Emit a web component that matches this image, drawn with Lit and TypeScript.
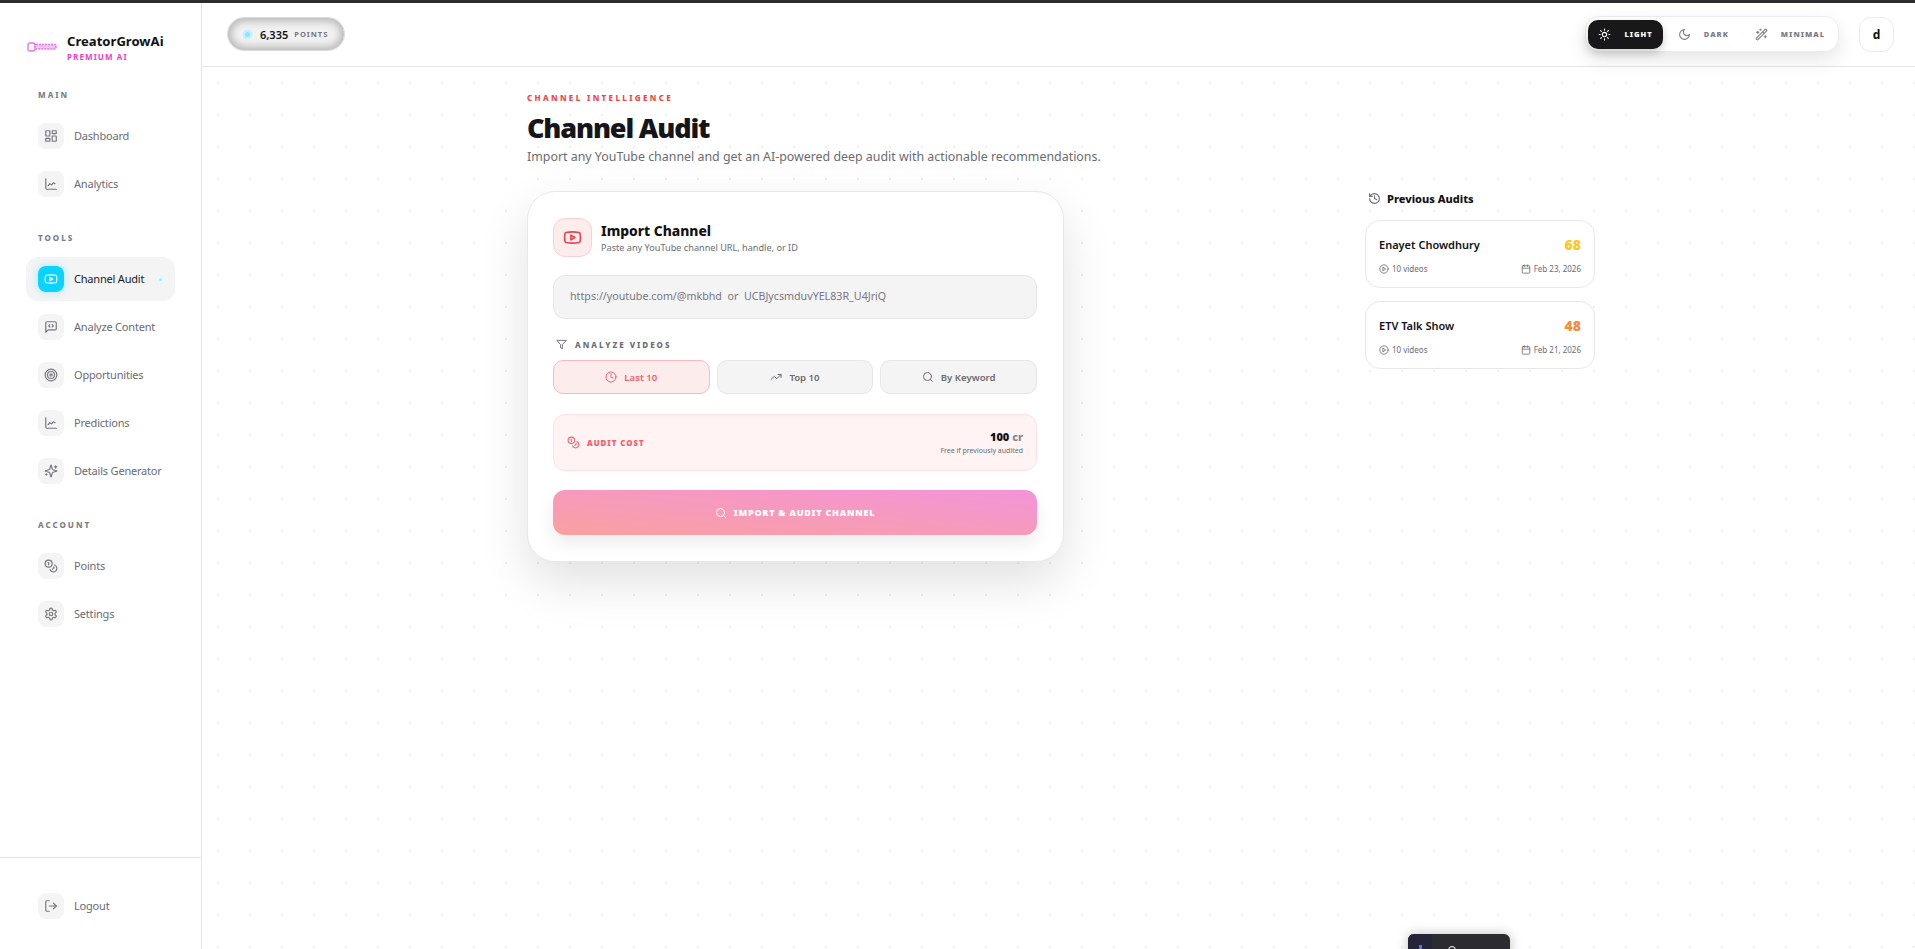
import { LitElement, html, svg, css } from 'lit';
import { customElement } from 'lit/decorators.js';

const icons: Record<string, unknown> = {
  dashboard: svg`<rect x="3" y="3" width="7" height="9" rx="1"/><rect x="14" y="3" width="7" height="5" rx="1"/><rect x="14" y="12" width="7" height="9" rx="1"/><rect x="3" y="16" width="7" height="5" rx="1"/>`,
  chart: svg`<path d="M3 3v16a2 2 0 0 0 2 2h16"/><path d="m7 15 3-3.5 3 2 3-3.5 3 1.5"/>`,
  youtube: svg`<path d="M2.5 17a24.12 24.12 0 0 1 0-10 2 2 0 0 1 1.4-1.4 49.56 49.56 0 0 1 16.2 0A2 2 0 0 1 21.5 7a24.12 24.12 0 0 1 0 10 2 2 0 0 1-1.4 1.4 49.55 49.55 0 0 1-16.2 0A2 2 0 0 1 2.5 17"/><path d="m10 15 5-3-5-3z"/>`,
  message: svg`<path d="M21 15a2 2 0 0 1-2 2H7l-4 4V5a2 2 0 0 1 2-2h14a2 2 0 0 1 2 2z"/><path d="m10 8-2 2 2 2"/><path d="m14 8 2 2-2 2"/>`,
  target: svg`<circle cx="12" cy="12" r="10"/><circle cx="12" cy="12" r="6"/><circle cx="12" cy="12" r="2"/>`,
  sparkles: svg`<path d="M9.937 15.5A2 2 0 0 0 8.5 14.063l-6.135-1.582a.5.5 0 0 1 0-.962L8.5 9.936A2 2 0 0 0 9.937 8.5l1.582-6.135a.5.5 0 0 1 .963 0L14.063 8.5A2 2 0 0 0 15.5 9.937l6.135 1.581a.5.5 0 0 1 0 .964L15.5 14.063a2 2 0 0 0-1.437 1.437l-1.582 6.135a.5.5 0 0 1-.963 0z"/><path d="M20 3v4"/><path d="M22 5h-4"/><path d="M4 17v2"/><path d="M5 18H3"/>`,
  coins: svg`<circle cx="8" cy="8" r="6"/><path d="M18.09 10.37A6 6 0 1 1 10.34 18"/><path d="M7 6h1v4"/><path d="m16.71 13.88.7.71-2.82 2.82"/>`,
  settings: svg`<path d="M12.22 2h-.44a2 2 0 0 0-2 2v.18a2 2 0 0 1-1 1.73l-.43.25a2 2 0 0 1-2 0l-.15-.08a2 2 0 0 0-2.73.73l-.22.38a2 2 0 0 0 .73 2.73l.15.1a2 2 0 0 1 1 1.72v.51a2 2 0 0 1-1 1.74l-.15.09a2 2 0 0 0-.73 2.73l.22.38a2 2 0 0 0 2.73.73l.15-.08a2 2 0 0 1 2 0l.43.25a2 2 0 0 1 1 1.73V20a2 2 0 0 0 2 2h.44a2 2 0 0 0 2-2v-.18a2 2 0 0 1 1-1.73l.43-.25a2 2 0 0 1 2 0l.15.08a2 2 0 0 0 2.73-.73l.22-.39a2 2 0 0 0-.73-2.73l-.15-.08a2 2 0 0 1-1-1.74v-.5a2 2 0 0 1 1-1.74l.15-.09a2 2 0 0 0 .73-2.73l-.22-.38a2 2 0 0 0-2.73-.73l-.15.08a2 2 0 0 1-2 0l-.43-.25a2 2 0 0 1-1-1.73V4a2 2 0 0 0-2-2z"/><circle cx="12" cy="12" r="3"/>`,
  logout: svg`<path d="m16 17 5-5-5-5"/><path d="M21 12H9"/><path d="M9 21H5a2 2 0 0 1-2-2V5a2 2 0 0 1 2-2h4"/>`,
  history: svg`<path d="M3 12a9 9 0 1 0 9-9 9.75 9.75 0 0 0-6.74 2.74L3 8"/><path d="M3 3v5h5"/><path d="M12 7v5l4 2"/>`,
  clock: svg`<circle cx="12" cy="12" r="10"/><path d="M12 6v6l4 2"/>`,
  trending: svg`<path d="M22 7 13.5 15.5l-5-5L2 17"/><path d="M16 7h6v6"/>`,
  search: svg`<circle cx="11" cy="11" r="8"/><path d="m21 21-4.3-4.3"/>`,
  filter: svg`<path d="M22 3H2l8 9.46V19l4 2v-8.54z"/>`,
  calendar: svg`<path d="M8 2v4"/><path d="M16 2v4"/><rect x="3" y="4" width="18" height="18" rx="2"/><path d="M3 10h18"/>`,
  play: svg`<circle cx="12" cy="12" r="10"/><path d="m10 8 6 4-6 4z"/>`,
  sun: svg`<circle cx="12" cy="12" r="4"/><path d="M12 2v2"/><path d="M12 20v2"/><path d="m4.93 4.93 1.41 1.41"/><path d="m17.66 17.66 1.41 1.41"/><path d="M2 12h2"/><path d="M20 12h2"/><path d="m6.34 17.66-1.41 1.41"/><path d="m19.07 4.93-1.41 1.41"/>`,
  moon: svg`<path d="M12 3a6 6 0 0 0 9 9 9 9 0 1 1-9-9Z"/>`,
  wand: svg`<path d="m21.64 3.64-1.28-1.28a1.21 1.21 0 0 0-1.72 0L2.36 18.64a1.21 1.21 0 0 0 0 1.72l1.28 1.28a1.2 1.2 0 0 0 1.72 0L21.64 5.36a1.2 1.2 0 0 0 0-1.72"/><path d="m14 7 3 3"/><path d="M5 6v4"/><path d="M19 14v4"/><path d="M10 2v2"/><path d="M7 8H3"/><path d="M21 16h-4"/><path d="M11 3H9"/>`,
};

const icon = (name: string, size = 16) => html`<svg class="ic" width=${size} height=${size} viewBox="0 0 24 24" fill="none" stroke="currentColor" stroke-width="2" stroke-linecap="round" stroke-linejoin="round">${icons[name]}</svg>`;

const groups = [
  { label: 'MAIN', items: [['dashboard', 'Dashboard'], ['chart', 'Analytics']] },
  { label: 'TOOLS', items: [['youtube', 'Channel Audit'], ['message', 'Analyze Content'], ['target', 'Opportunities'], ['chart', 'Predictions'], ['sparkles', 'Details Generator']] },
  { label: 'ACCOUNT', items: [['coins', 'Points'], ['settings', 'Settings']] },
];

const audits = [
  { name: 'Enayet Chowdhury', score: 68, color: '#fcc81e', date: 'Feb 23, 2026' },
  { name: 'ETV Talk Show', score: 48, color: '#ee8f45', date: 'Feb 21, 2026' },
];

@customElement('app-root')
export class AppRoot extends LitElement {
  static styles = css`
    :host {
      display: block;
      height: 100vh;
      overflow: hidden;
      position: relative;
      background: #fff;
      color: #111114;
      font-family: 'Noto Sans', 'Open Sans', sans-serif;
    }
    .ic { display: block; flex: none; }
    .topline { height: 3px; background: #2b2b30; }
    .shell { display: flex; height: calc(100vh - 3px); }

    .sidebar {
      width: 202px;
      flex: none;
      box-sizing: border-box;
      border-right: 1px solid #e6e6e6;
      display: flex;
      flex-direction: column;
    }
    .brand {
      display: flex;
      align-items: center;
      gap: 10px;
      padding: 28px 0 25px 27px;
    }
    .brand-name { font-size: 13.1px; font-weight: 700; line-height: 20px; }
    .brand-sub { font-size: 8px; font-weight: 700; line-height: 12px; letter-spacing: 1.1px; color: #f23dc0; }
    nav { flex: 1; padding: 0 26px; }
    .group { margin-bottom: 25px; }
    .group-label {
      font-size: 8px;
      font-weight: 800;
      line-height: 14px;
      letter-spacing: 2px;
      color: #7d7d85;
      margin: 0 0 12px 12px;
    }
    .item {
      display: flex;
      align-items: center;
      gap: 10px;
      height: 44px;
      margin-bottom: 4px;
      padding: 0 12px;
      width: 149px;
      box-sizing: border-box;
      border-radius: 12px;
      font-size: 11px;
      letter-spacing: -.2px;
      color: #6b6b73;
      white-space: nowrap;
    }
    .item:last-child { margin-bottom: 0; }
    .item-label { margin-bottom: 2px; }
    .tile {
      width: 26px;
      height: 26px;
      flex: none;
      border-radius: 8px;
      background: #f4f4f5;
      display: flex;
      align-items: center;
      justify-content: center;
      color: #75757c;
    }
    .item.active { background: #f4f4f5; color: #1a1a1f; }
    .item.active .tile { background: #0bd3ff; color: #fff; box-shadow: 0 0 8px rgba(11, 211, 255, .35); }
    .pip {
      width: 3px;
      height: 3px;
      border-radius: 50%;
      background: #a5ebff;
      box-shadow: 0 0 0 3px #e6f9ff;
      margin-left: auto;
      margin-right: 1px;
    }
    .foot { border-top: 1px solid #e6e6e6; padding: 26px 26px 21px; }

    .main { flex: 1; min-width: 0; display: flex; flex-direction: column; }
    .topbar {
      height: 64px;
      flex: none;
      box-sizing: border-box;
      border-bottom: 1px solid #e6e6e6;
      display: flex;
      align-items: center;
      padding: 0 21px 1px 25px;
    }
    .points {
      display: flex;
      align-items: center;
      gap: 6px;
      width: 118px;
      height: 34px;
      box-sizing: border-box;
      padding-left: 15px;
      border-radius: 17px;
      border: 1px solid #dcdcdc;
      background: #f2f2f2;
      box-shadow: inset 0 0 9px 3px #b4b4b4;
    }
    .points-dot {
      width: 5px;
      height: 5px;
      margin: 0 4px 0 2px;
      border-radius: 50%;
      background: #8fe4ff;
      box-shadow: 0 0 0 2.5px #c4f1ff;
    }
    .points b { font-size: 11px; font-weight: 600; }
    .points span { font-size: 7.5px; font-weight: 700; letter-spacing: 1px; color: #77777f; }
    .modes {
      margin-left: auto;
      display: flex;
      align-items: center;
      height: 36px;
      box-sizing: border-box;
      padding-left: 2px;
      border: 1px solid #ececec;
      border-radius: 14px;
      background: #fff;
      box-shadow: 0 8px 20px rgba(0, 0, 0, .1);
    }
    .mode {
      display: flex;
      align-items: center;
      gap: 13px;
      height: 29px;
      padding: 0 13px;
      border-radius: 10px;
      font-size: 7.5px;
      font-weight: 900;
      letter-spacing: 1px;
      color: #7d7d85;
    }
    .mode.on {
      padding: 0 10px;
      margin-right: 2px;
      background: #18181b;
      color: #fff;
      box-shadow: 0 4px 10px rgba(0, 0, 0, .2);
    }
    .avatar {
      margin-left: 20px;
      width: 35px;
      height: 35px;
      box-sizing: border-box;
      border: 1px solid #ececec;
      border-radius: 12px;
      display: flex;
      align-items: center;
      justify-content: center;
      font-size: 12px;
      font-weight: 700;
    }

    .content {
      flex: 1;
      padding: 25px 0 0 325px;
      background-image: radial-gradient(circle, #f0f0f0 1px, transparent 1.2px);
      background-size: 32px 32px;
    }
    .eyebrow { font-size: 8px; font-weight: 800; line-height: 12px; letter-spacing: 2.35px; color: #f04444; }
    h1 { margin: 6px 0 0; font-size: 27px; font-weight: 900; line-height: 36px; letter-spacing: -1.15px; color: #15151a; }
    .lede { margin: 1px 0 0; font-size: 12.4px; line-height: 20px; color: #6b6b73; }
    .columns { display: flex; justify-content: space-between; width: 1068px; margin-top: 24px; align-items: flex-start; }

    .card {
      width: 537px;
      box-sizing: border-box;
      padding: 26px 26px 26px 25px;
      background: #fff;
      border: 1px solid #e8e8e8;
      border-radius: 28px;
      box-shadow: 0 20px 50px rgba(0, 0, 0, .12);
    }
    .card-head { display: flex; align-items: center; gap: 9px; }
    .card-tile {
      width: 39px;
      height: 39px;
      box-sizing: border-box;
      border: 1px solid #fbd0d0;
      border-radius: 12px;
      background: #fdecec;
      color: #ee3f4a;
      display: flex;
      align-items: center;
      justify-content: center;
    }
    .card-title { font-size: 13.8px; font-weight: 800; line-height: 20px; }
    .card-sub { font-size: 9.15px; line-height: 14px; color: #6b6b73; }
    input {
      display: block;
      width: 100%;
      height: 44px;
      box-sizing: border-box;
      margin-top: 18px;
      padding: 0 16px 2px;
      border: 1px solid #e6e6e6;
      border-radius: 12px;
      background: #f4f4f5;
      font: 10.7px 'Noto Sans', sans-serif;
      outline: none;
    }
    input::placeholder { color: #77777f; opacity: 1; }
    .filter-label {
      display: flex;
      align-items: center;
      gap: 8px;
      margin: 18px 0 9px 3px;
      height: 14px;
      font-size: 8px;
      font-weight: 800;
      letter-spacing: 2px;
      color: #6b6b73;
    }
    .tabs { display: grid; grid-template-columns: repeat(3, 1fr); gap: 7px; }
    .tab {
      display: flex;
      align-items: center;
      justify-content: center;
      gap: 7px;
      height: 34px;
      box-sizing: border-box;
      border: 1px solid #e6e6e6;
      border-radius: 10px;
      background: #f4f4f5;
      font-size: 9.6px;
      font-weight: 600;
      color: #6b6b73;
    }
    .tab.on { background: #fdecec; border-color: #fbb9bd; color: #f2606c; }
    .cost {
      display: flex;
      align-items: center;
      justify-content: space-between;
      height: 57px;
      box-sizing: border-box;
      margin-top: 20px;
      padding: 0 13px;
      border: 1px solid #fde0e0;
      border-radius: 12px;
      background: #fff4f3;
    }
    .cost-label {
      display: flex;
      align-items: center;
      gap: 7px;
      font-size: 7.8px;
      font-weight: 900;
      letter-spacing: 1px;
      color: #f2606c;
    }
    .cost-right { text-align: right; }
    .cost-num { font-size: 11px; font-weight: 900; line-height: 16px; }
    .cost-num span { color: #85858c; font-weight: 800; }
    .cost-note { font-size: 7px; line-height: 11px; color: #6b6b73; }
    .submit {
      display: flex;
      align-items: center;
      justify-content: center;
      gap: 7px;
      height: 45px;
      margin-top: 19px;
      border-radius: 12px;
      background: linear-gradient(to top right, #f9a0a0, #f394d9);
      box-shadow: 0 8px 18px rgba(0, 0, 0, .08);
      color: #fff;
      font-size: 9px;
      font-weight: 900;
      letter-spacing: .75px;
    }

    .side { width: 230px; }
    .side-head {
      display: flex;
      align-items: center;
      gap: 6px;
      height: 16px;
      margin: -1px 0 14px 3px;
      font-size: 11px;
      font-weight: 800;
      color: #111114;
    }
    .side-head .ic { color: #6b6b73; }
    .audit {
      height: 68px;
      box-sizing: border-box;
      margin-bottom: 13px;
      padding: 10px 13px 0;
      background: #fff;
      border: 1px solid #e8e8e8;
      border-radius: 15px;
    }
    .audit-top { display: flex; align-items: center; justify-content: space-between; height: 26px; }
    .audit-name { font-size: 11px; font-weight: 600; }
    .audit-score { font-size: 14px; font-weight: 900; }
    .audit-meta {
      display: flex;
      align-items: center;
      justify-content: space-between;
      margin-top: 6px;
      font-size: 8px;
      color: #6b6b73;
    }
    .audit-meta > div { display: flex; align-items: center; gap: 3px; }

    .devbar {
      position: absolute;
      left: 1408px;
      top: 934px;
      width: 102px;
      height: 30px;
      display: flex;
      border-radius: 6px;
      background: #2b2b30;
      box-shadow: 0 0 12px rgba(0, 0, 0, .25);
      overflow: hidden;
    }
    .devbar i { width: 24px; background: #25253a; position: relative; }
    .devbar i::after {
      content: '';
      position: absolute;
      left: 11px;
      top: 11px;
      width: 3px;
      height: 6px;
      background: #6a6ae0;
    }
    .devbar u {
      width: 8px;
      height: 8px;
      margin: 12px 0 0 16px;
      box-sizing: border-box;
      border: 1.5px solid #fff;
      border-radius: 50%;
    }
  `;

  private navItem(ic: string, label: string) {
    const active = label === 'Channel Audit';
    return html`<div class="item ${active ? 'active' : ''}">
      <div class="tile">${icon(ic, 14)}</div>
      <span class="item-label">${label}</span>
      ${active ? html`<span class="pip"></span>` : ''}
    </div>`;
  }

  render() {
    return html`
      <div class="topline"></div>
      <div class="shell">
        <aside class="sidebar">
          <div class="brand">
            <svg width="30" height="10" viewBox="0 0 30 10" fill="none" stroke="#e277e8" stroke-width="1.4">
              <rect x="1" y="1" width="7" height="8" rx="2"/>
              <rect x="8" y="2.5" width="21" height="4.5" rx="1" fill="#f3c4f2" stroke-dasharray="2 1"/>
            </svg>
            <div>
              <div class="brand-name">CreatorGrowAi</div>
              <div class="brand-sub">PREMIUM AI</div>
            </div>
          </div>
          <nav>
            ${groups.map(g => html`<div class="group">
              <div class="group-label">${g.label}</div>
              ${g.items.map(([ic, label]) => this.navItem(ic, label))}
            </div>`)}
          </nav>
          <div class="foot">${this.navItem('logout', 'Logout')}</div>
        </aside>
        <div class="main">
          <header class="topbar">
            <div class="points">
              <span class="points-dot"></span>
              <b>6,335</b>
              <span>POINTS</span>
            </div>
            <div class="modes">
              <div class="mode on">${icon('sun', 13)}LIGHT</div>
              <div class="mode">${icon('moon', 13)}DARK</div>
              <div class="mode">${icon('wand', 13)}MINIMAL</div>
            </div>
            <div class="avatar">d</div>
          </header>
          <main class="content">
            <div class="eyebrow">CHANNEL INTELLIGENCE</div>
            <h1>Channel Audit</h1>
            <p class="lede">Import any YouTube channel and get an AI-powered deep audit with actionable recommendations.</p>
            <div class="columns">
              <section class="card">
                <div class="card-head">
                  <div class="card-tile">${icon('youtube', 19)}</div>
                  <div>
                    <div class="card-title">Import Channel</div>
                    <div class="card-sub">Paste any YouTube channel URL, handle, or ID</div>
                  </div>
                </div>
                <input placeholder="https://youtube.com/@mkbhd  or  UCBJycsmduvYEL83R_U4JriQ" />
                <div class="filter-label">${icon('filter', 11)}ANALYZE VIDEOS</div>
                <div class="tabs">
                  <div class="tab on">${icon('clock', 12)}Last 10</div>
                  <div class="tab">${icon('trending', 12)}Top 10</div>
                  <div class="tab">${icon('search', 12)}By Keyword</div>
                </div>
                <div class="cost">
                  <div class="cost-label">${icon('coins', 13)}AUDIT COST</div>
                  <div class="cost-right">
                    <div class="cost-num">100 <span>cr</span></div>
                    <div class="cost-note">Free if previously audited</div>
                  </div>
                </div>
                <div class="submit">${icon('search', 12)}IMPORT &amp; AUDIT CHANNEL</div>
              </section>
              <aside class="side">
                <div class="side-head">${icon('history', 13)}Previous Audits</div>
                ${audits.map(a => html`<div class="audit">
                  <div class="audit-top">
                    <div class="audit-name">${a.name}</div>
                    <div class="audit-score" style="color: ${a.color}">${a.score}</div>
                  </div>
                  <div class="audit-meta">
                    <div>${icon('play', 10)}10 videos</div>
                    <div>${icon('calendar', 10)}${a.date}</div>
                  </div>
                </div>`)}
              </aside>
            </div>
          </main>
        </div>
      </div>
      <div class="devbar"><i></i><u></u></div>
    `;
  }
}
